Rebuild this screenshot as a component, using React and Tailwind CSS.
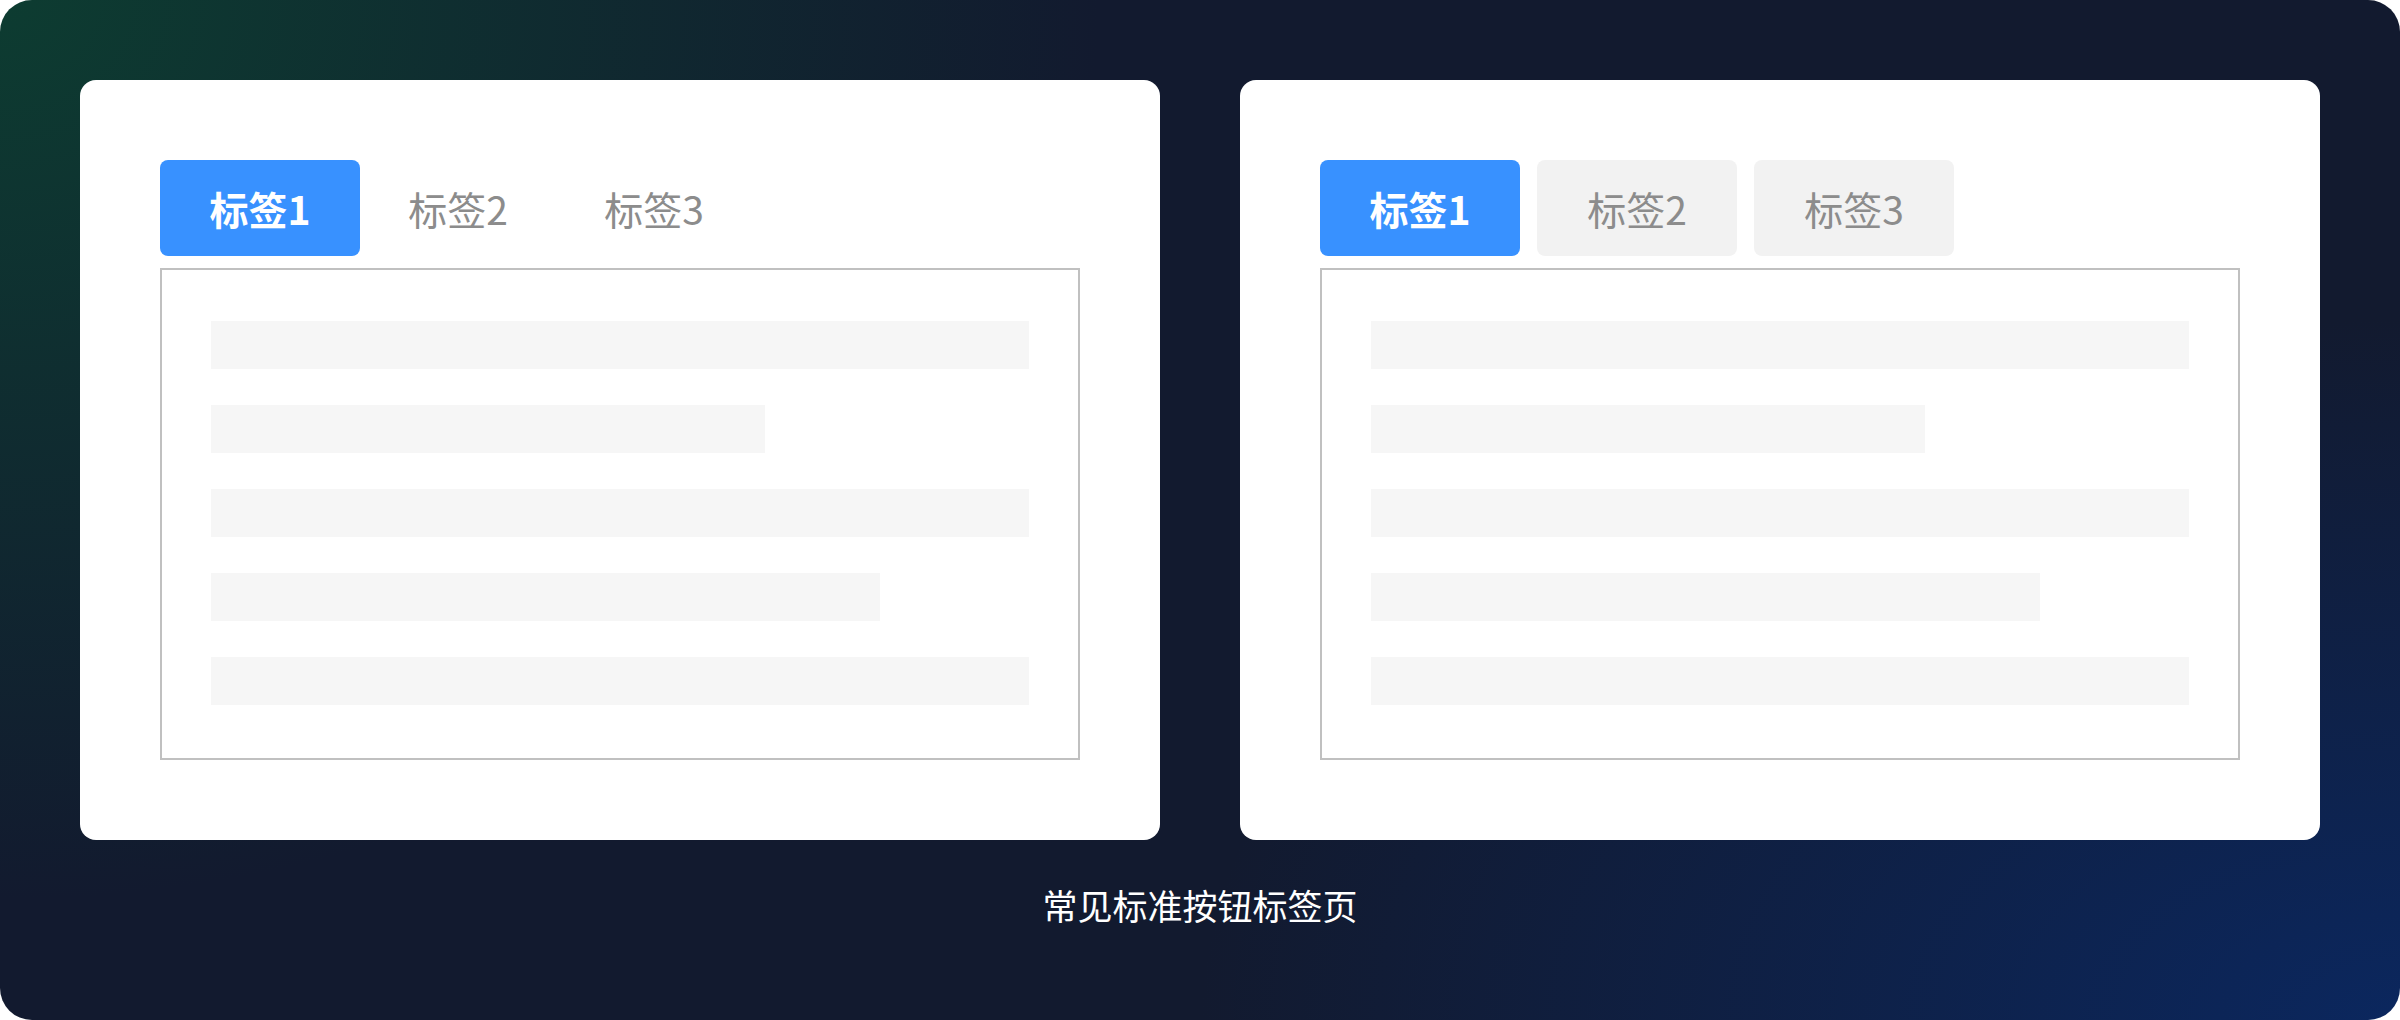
import React from 'react'

const bars = [818, 554, 818, 669, 818]

function Skeleton() {
  return (
    <div className="border-2 border-[#c0c0c0] h-[492px] px-[49px] py-[51px] flex flex-col gap-[36px]">
      {bars.map((w, i) => (
        <div key={i} className="h-[48px] bg-[#f6f6f6]" style={{ width: w }} />
      ))}
    </div>
  )
}

function TabCard({ filled }) {
  const tabs = ['标签1', '标签2', '标签3']
  return (
    <div className="w-[1080px] h-[760px] bg-white rounded-[16px] p-[80px] flex flex-col gap-[12px]">
      <div className={`flex ${filled ? 'gap-[17px]' : ''}`}>
        {tabs.map((t, i) => {
          const active = i === 0
          return (
            <div
              key={t}
              className={`h-[96px] rounded-[8px] flex items-center justify-center text-[39px] leading-none ${
                active
                  ? 'w-[200px] bg-[#3891ff] text-white font-bold'
                  : filled
                    ? 'w-[200px] bg-[#f2f2f2] text-[#8c8c8c]'
                    : 'w-[196px] text-[#8c8c8c]'
              }`}
            >
              {t}
            </div>
          )
        })}
      </div>
      <Skeleton />
    </div>
  )
}

export default function App() {
  return (
    <div
      className="w-[2400px] h-[1020px] rounded-[32px] overflow-hidden bg-[#121a2f] bg-[radial-gradient(ellipse_1100px_900px_at_0%_0%,rgba(13,60,49,1),rgba(18,26,47,0)),radial-gradient(ellipse_1200px_700px_at_100%_100%,rgba(11,39,94,1),rgba(18,26,47,0))] px-[80px] pt-[80px] flex flex-col items-center"
      style={{ fontFamily: '"Noto Sans CJK SC", "Noto Sans", sans-serif' }}
    >
      <div className="flex gap-[80px]">
        <TabCard filled={false} />
        <TabCard filled />
      </div>
      <div className="mt-[45px] text-white text-[35px] leading-[40px]">常见标准按钮标签页</div>
    </div>
  )
}
